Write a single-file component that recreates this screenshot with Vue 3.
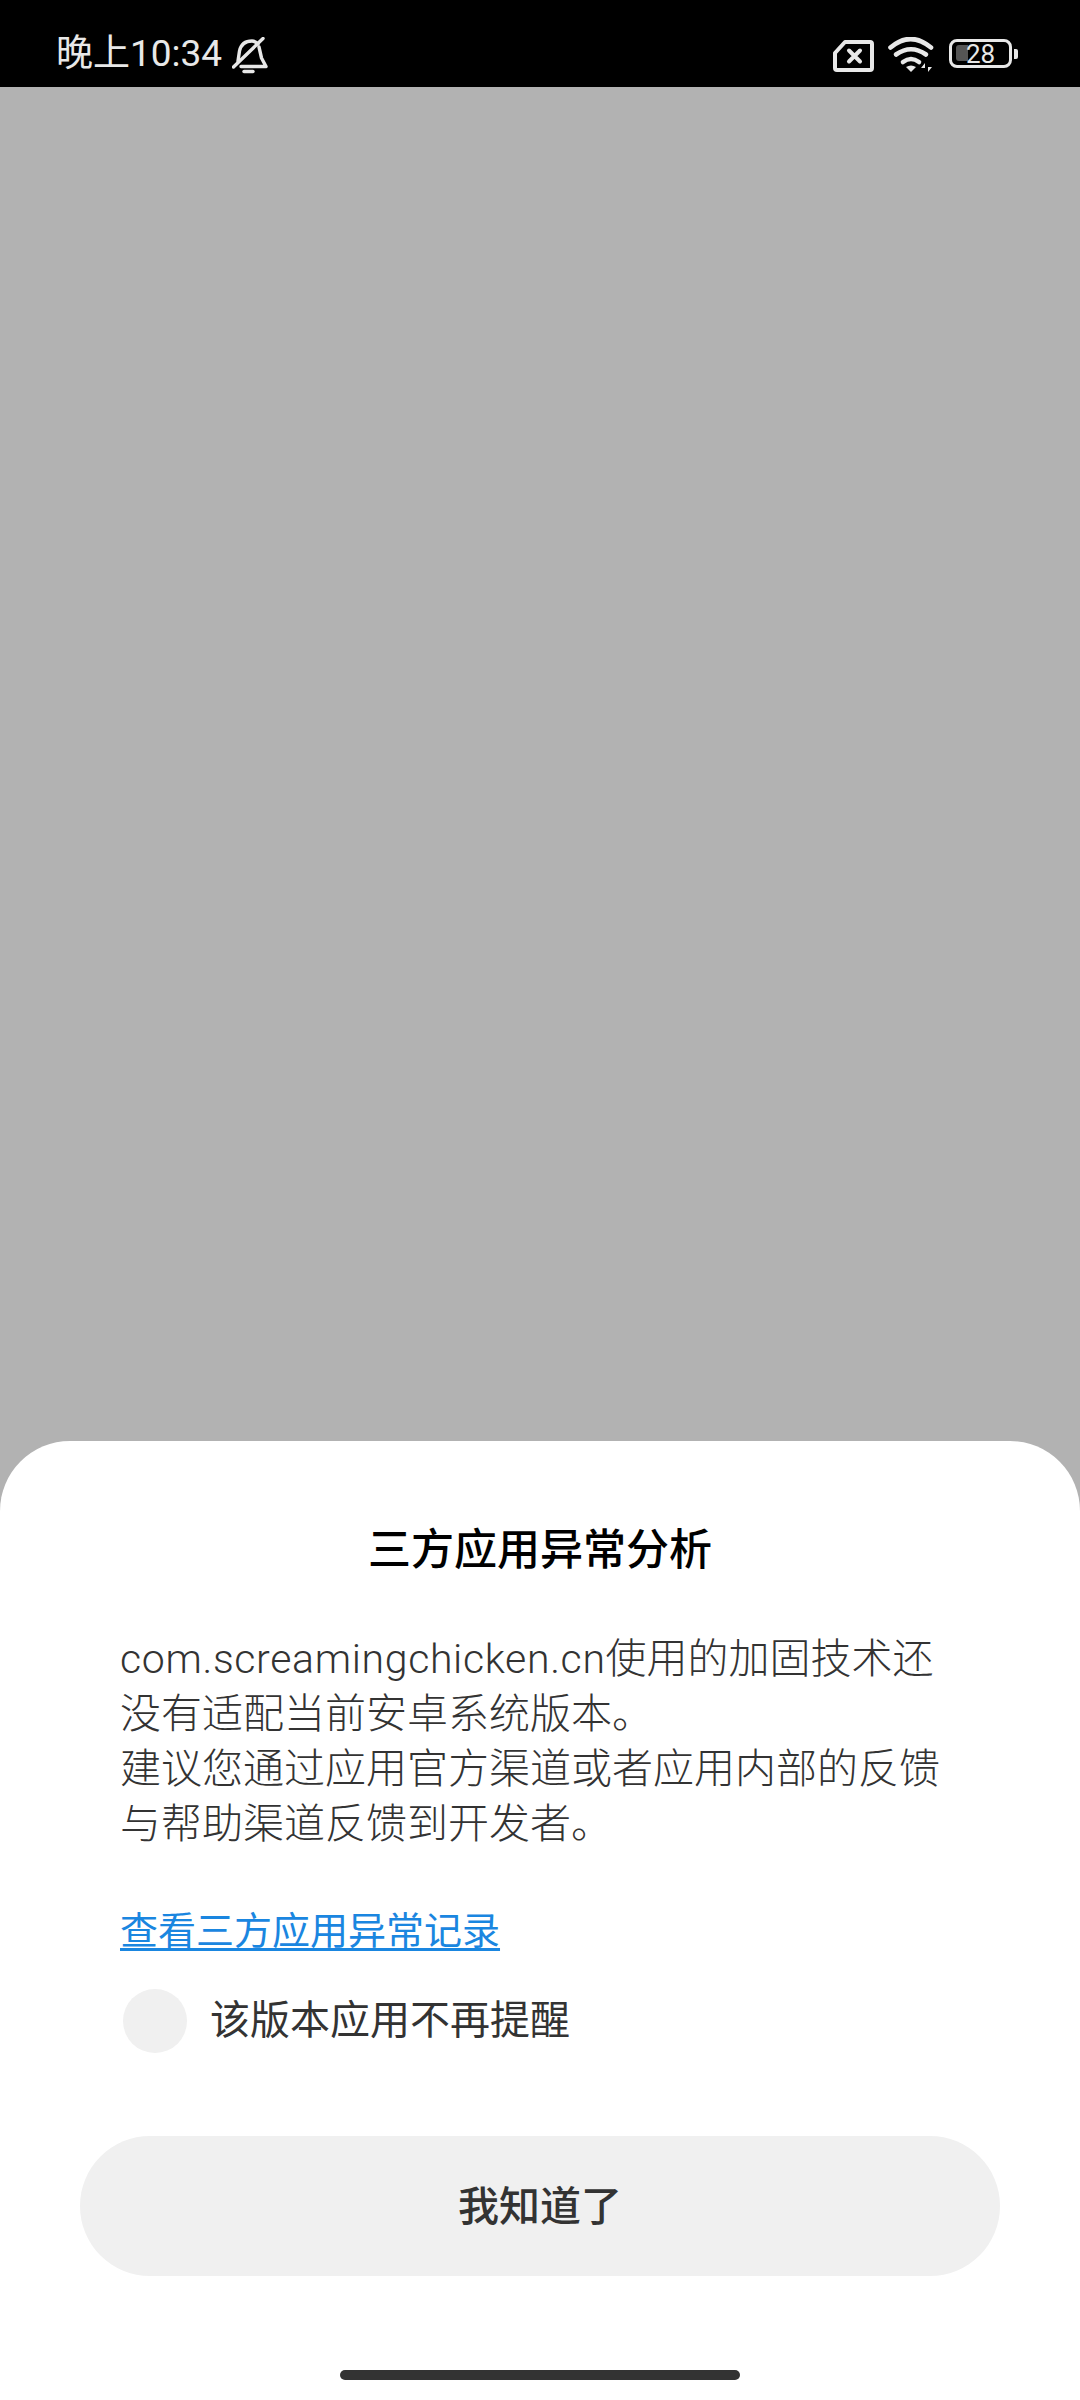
<script setup>
const lines = ['没有适配当前安卓系统版本。', '建议您通过应用官方渠道或者应用内部的反馈', '与帮助渠道反馈到开发者。']
</script>

<template>
  <div class="page">
    <header class="status">
      <div class="status-left">
        <span class="time">晚上10:34</span>
        <svg class="bell" width="36" height="38" viewBox="0 0 36 38" fill="none" stroke="#e8e8e8" stroke-width="3.4" stroke-linecap="round" stroke-linejoin="round">
          <path d="M6 24 L7.5 14 C9 7 14 4 20 4 C22 4 24 5 26 7" />
          <path d="M27 10 L29.5 21 L34 29.5 L9 29.5" />
          <path d="M31 1.5 L1.5 30" />
          <path d="M12 34.5 H21" />
        </svg>
      </div>
      <div class="status-right">
        <svg class="sim" width="41" height="32" viewBox="0 0 41 32" fill="none" stroke="#e8e8e8" stroke-width="4" stroke-linejoin="round">
          <path d="M12 2 H37 Q39 2 39 4 V28 Q39 30 37 30 H4 Q2 30 2 28 V13 Z" />
          <path d="M16 10.5 L27 21.5 M27 10.5 L16 21.5" stroke-linecap="round" />
        </svg>
        <svg class="wifi" width="46" height="35" viewBox="0 0 46 35" fill="none" stroke="#e8e8e8" stroke-width="4.6" stroke-linecap="round">
          <path d="M2.5 10.5 Q22.5 -6.5 43 10.5" />
          <path d="M8 17.5 Q23 7 38 17.5" />
          <path d="M15 25 Q23 19 31 25" />
          <path d="M18 30 Q23 27 28 30 L23 35 Z" fill="#e8e8e8" stroke="none" />
          <path d="M37 35 V26 L33 31 H37 Z M40 26 V35 L44 30 H40 Z" fill="#e8e8e8" stroke="none" />
        </svg>
        <div class="battery">
          <div class="battery-shell">
            <span class="battery-fill"></span>
            <span class="battery-num">28</span>
          </div>
          <span class="battery-nub"></span>
        </div>
      </div>
    </header>

    <div class="scrim"></div>

    <section class="sheet">
      <h1 class="title">三方应用异常分析</h1>
      <p class="body">
        <span class="line"><span class="pkg">com.screamingchicken.cn</span>使用的加固技术还</span>
        <span v-for="line in lines" :key="line" class="line">{{ line }}</span>
      </p>
      <a class="link">查看三方应用异常记录</a>
      <label class="check">
        <span class="dot"></span>
        <span class="check-text">该版本应用不再提醒</span>
      </label>
      <button class="btn">我知道了</button>
      <div class="home"></div>
    </section>
  </div>
</template>

<style>
html, body { margin: 0; padding: 0; background: #b2b2b2; }
</style>

<style scoped>
.page {
  width: 1080px;
  height: 2400px;
  display: flex;
  flex-direction: column;
  overflow: hidden;
  font-family: "Roboto", "Noto Sans CJK SC", sans-serif;
}
.status {
  height: 87px;
  flex: none;
  background: #000;
  color: #e8e8e8;
  display: flex;
  justify-content: space-between;
  align-items: flex-start;
  padding: 0 62px 0 56px;
  box-sizing: border-box;
}
.status-left { display: flex; align-items: flex-start; padding-top: 31px; }
.time {
  font-size: 37px;
  line-height: 46px;
  width: 176px;
  white-space: nowrap;
}
.bell { margin-top: 6px; }
.status-right { display: flex; align-items: flex-start; padding-top: 37px; }
.sim { margin-top: 3px; margin-right: 14px; }
.wifi { margin-right: 15px; }
.battery { display: flex; align-items: center; margin-top: 2px; }
.battery-shell {
  width: 63px;
  height: 29px;
  box-sizing: border-box;
  border: 3.4px solid #e8e8e8;
  border-radius: 8px;
  display: flex;
  align-items: center;
  position: relative;
  padding-left: 14px;
}
.battery-fill {
  position: absolute;
  left: 4px;
  top: 3px;
  width: 12px;
  height: 16px;
  background: #555;
  border-radius: 3px 0 0 3px;
}
.battery-num {
  position: relative;
  font-size: 26px;
  line-height: 22px;
}
.battery-nub {
  width: 4px;
  height: 10px;
  margin-left: 2px;
  background: #e8e8e8;
  border-radius: 0 2px 2px 0;
}
.scrim { flex: 1; background: #b2b2b2; }
.sheet {
  flex: none;
  height: 959px;
  background: #fff;
  border-radius: 70px 70px 0 0;
  box-sizing: border-box;
  padding: 80px 120px 0;
  display: flex;
  flex-direction: column;
}
.title {
  margin: 0;
  font-size: 43px;
  line-height: 58px;
  font-weight: 500;
  text-align: center;
  color: #000;
}
.body {
  margin: 53px 0 0;
  font-size: 41px;
  line-height: 55px;
  color: #333;
  font-weight: 300;
}
.line { display: block; white-space: nowrap; }
.pkg { letter-spacing: 0.65px; }
.link {
  margin-top: 54px;
  font-size: 38px;
  line-height: 50px;
  color: #1a86e0;
  text-decoration: underline;
  text-underline-offset: 4px;
  align-self: flex-start;
}
.check { display: flex; align-items: center; margin: 33px 0 0 3px; }
.dot { width: 64px; height: 64px; border-radius: 50%; background: #f0f0f0; }
.check-text { margin-left: 23px; font-size: 40px; line-height: 64px; color: #333; }
.btn {
  margin: 83px -40px 0;
  height: 140px;
  flex: none;
  border: 0;
  border-radius: 70px;
  background: #f0f0f0;
  color: #333;
  font-family: inherit;
  font-size: 41px;
  font-weight: 500;
  padding: 0 0 6px;
}
.home {
  width: 400px;
  height: 10px;
  margin: 94px auto 0;
  background: #333;
  border-radius: 5px;
  flex: none;
}
</style>
